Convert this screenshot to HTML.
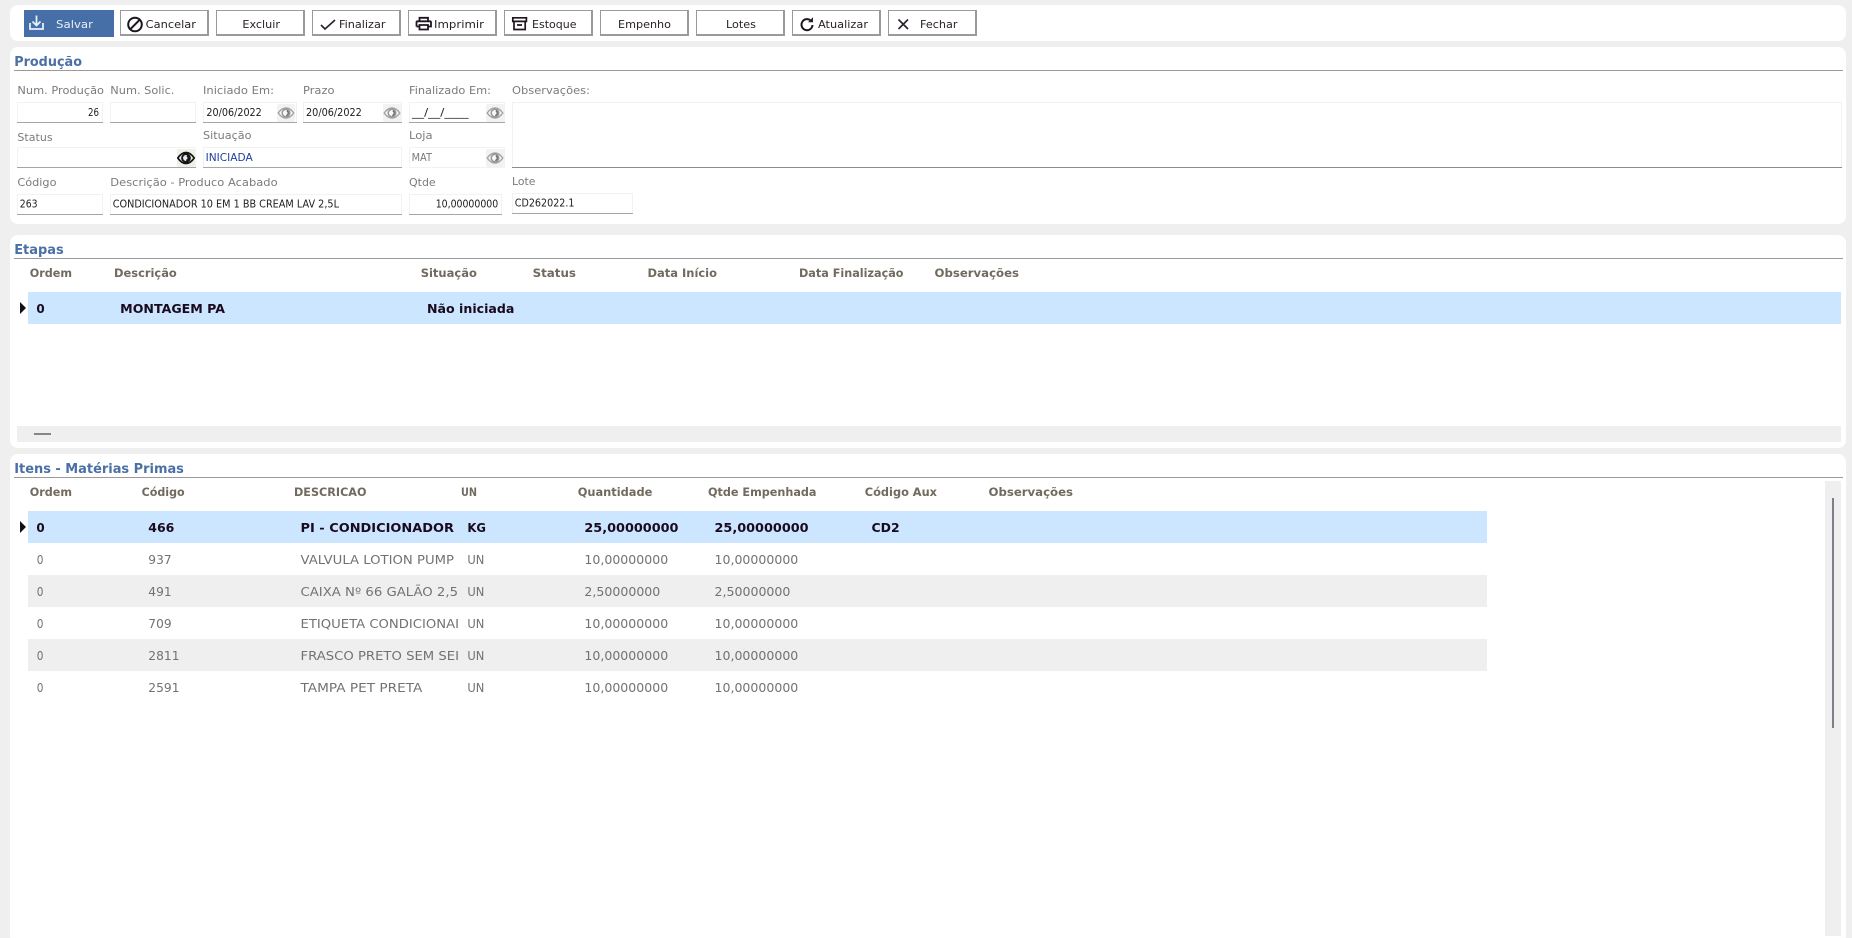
<!DOCTYPE html>
<html lang="pt-BR">
<head>
<meta charset="utf-8">
<title>Produção</title>
<style>
html,body{margin:0;padding:0;width:1852px;height:938px;overflow:hidden;background:#efefef}
svg{display:block}
text{font-family:"DejaVu Sans","Liberation Sans",sans-serif;font-size:11px;white-space:pre}
.t{font-size:13px;font-weight:700;fill:#4a70a6}
.b{fill:#2a2226;font-size:11px}
.l{fill:#7b7b7b}
.v{fill:#1c1c1c;font-size:11px}
.h{font-weight:700;fill:#72695f;font-size:11.5px}
.s{font-weight:700;fill:#1a0a1e;font-size:12px}
.r{fill:#727272;font-size:12px}
.i{fill:none;stroke:#2a1f2a;stroke-width:1.6}
.k{fill:none;stroke:#1e161e;stroke-width:2}
</style>
</head>
<body>
<svg width="1852" height="938" viewBox="0 0 1852 938" xmlns="http://www.w3.org/2000/svg">
<defs>
<symbol id="eye" viewBox="0 0 18 18">
<rect x="0" y="0" width="18" height="18" rx="2" fill="#f2f2f2"/>
<path d="M1.200 9C3.800 5.300 6.400 4 9 4s5.200 1.300 7.800 5C14.200 12.700 11.600 14 9 14S3.800 12.700 1.200 9z" fill="#f7f7f7" stroke="#a2a2a2" stroke-width="1.400"/>
<circle cx="9" cy="9" r="3.800" fill="none" stroke="#969696" stroke-width="1.500"/>
<path d="M9.800 6.800a2.400 2.400 0 0 1-.6 4.600" fill="none" stroke="#6f6f6f" stroke-width="1.400"/>
</symbol>
<symbol id="eyed" viewBox="0 0 18 18">
<rect x="0" y="0" width="18" height="18" rx="2" fill="#f2efe8"/>
<path d="M.8 9C3.600 4.900 6.300 3.500 9 3.500s5.400 1.400 8.200 5.500C14.400 13.100 11.700 14.500 9 14.500S3.600 13.100.8 9z" fill="#e9edf2" stroke="#141414" stroke-width="1.700"/>
<circle cx="9" cy="9" r="3.900" fill="none" stroke="#141414" stroke-width="1.900"/>
<path d="M9.800 6.800a2.400 2.400 0 0 1-.6 4.600" fill="none" stroke="#141414" stroke-width="1.600"/>
</symbol>
</defs>

<!-- panels -->
<rect x="10" y="5" width="1836" height="36" rx="8" fill="#fff"/>
<rect x="10" y="47" width="1836" height="177" rx="8" fill="#fff"/>
<rect x="10" y="235" width="1836" height="213" rx="8" fill="#fff"/>
<rect x="10" y="454" width="1836" height="490" rx="8" fill="#fff"/>

<!-- toolbar -->
<rect x="24" y="10" width="90" height="27" fill="#466fa8"/>
<g fill="#9a9a9a">
<rect x="120" y="10" width="89" height="26"/><rect x="216" y="10" width="89" height="26"/><rect x="312" y="10" width="89" height="26"/><rect x="408" y="10" width="89" height="26"/><rect x="504" y="10" width="89" height="26"/><rect x="600" y="10" width="89" height="26"/><rect x="696" y="10" width="89" height="26"/><rect x="792" y="10" width="89" height="26"/><rect x="888" y="10" width="89" height="26"/>
</g>
<g fill="#fff">
<rect x="121" y="11" width="86" height="23"/><rect x="217" y="11" width="86" height="23"/><rect x="313" y="11" width="86" height="23"/><rect x="409" y="11" width="86" height="23"/><rect x="505" y="11" width="86" height="23"/><rect x="601" y="11" width="86" height="23"/><rect x="697" y="11" width="86" height="23"/><rect x="793" y="11" width="86" height="23"/><rect x="889" y="11" width="86" height="23"/>
</g>
<path d="M36.500 15.500V25M32.500 21.500l4 4 4-4M30 23v6h13v-6" fill="none" stroke="#e8eef6" stroke-width="1.800"/>
<circle cx="135" cy="24.500" r="6.800" class="k"/><path d="M130.200 29.300L139.800 19.700" class="k"/>
<path d="M321 25l4 4 10-9" class="i"/>
<path d="M419.500 21.500V17.800h8.500v3.700M416.500 26.500v-4.200q0-1 1-1h12.500q1 0 1 1v4.200h-3M419.500 26.500h-3M419.500 25h8.500v4.500h-8.500z" class="k" stroke-width="1.800" style="stroke-width:1.800"/>
<path d="M512.800 17.800h13.600v3.600h-13.600zM514 21.400V29.500h11.200V21.400M517 25h5" class="k" style="stroke-width:1.700"/>
<path d="M811.500 21.500A5.500 5.500 0 1 0 812.500 25" class="k"/><path d="M808 22.200h5v-5z" fill="#2a1f2a"/>
<path d="M898.500 19.500l9.500 9.500M908 19.500L898.500 29" class="i"/>

<text x="56" y="28" fill="#e8eef6" textLength="37" lengthAdjust="spacingAndGlyphs">Salvar</text>
<text class="b" x="145.700" y="28" textLength="50.300" lengthAdjust="spacingAndGlyphs">Cancelar</text>
<text class="b" x="242.400" y="28" textLength="37.600" lengthAdjust="spacingAndGlyphs">Excluir</text>
<text class="b" x="339" y="28" textLength="46.500" lengthAdjust="spacingAndGlyphs">Finalizar</text>
<text class="b" x="434" y="28" textLength="50" lengthAdjust="spacingAndGlyphs">Imprimir</text>
<text class="b" x="532" y="28" textLength="44.500" lengthAdjust="spacingAndGlyphs">Estoque</text>
<text class="b" x="618" y="28" textLength="53" lengthAdjust="spacingAndGlyphs">Empenho</text>
<text class="b" x="726" y="28" textLength="30" lengthAdjust="spacingAndGlyphs">Lotes</text>
<text class="b" x="818" y="28" textLength="50" lengthAdjust="spacingAndGlyphs">Atualizar</text>
<text class="b" x="920" y="28" textLength="37.500" lengthAdjust="spacingAndGlyphs">Fechar</text>

<!-- Produção -->
<text class="t" x="14.200" y="66" textLength="67.800" lengthAdjust="spacingAndGlyphs">Produção</text>
<rect x="14" y="70" width="1829" height="1" fill="#9a9a9a"/>
<text class="l" x="17.400" y="94" textLength="86.600" lengthAdjust="spacingAndGlyphs">Num. Produção</text>
<text class="l" x="110.300" y="94" textLength="64.100" lengthAdjust="spacingAndGlyphs">Num. Solic.</text>
<text class="l" x="203" y="94" textLength="71" lengthAdjust="spacingAndGlyphs">Iniciado Em:</text>
<text class="l" x="303" y="94" textLength="31.500" lengthAdjust="spacingAndGlyphs">Prazo</text>
<text class="l" x="409" y="94" textLength="82" lengthAdjust="spacingAndGlyphs">Finalizado Em:</text>
<text class="l" x="512" y="94" textLength="78" lengthAdjust="spacingAndGlyphs">Observações:</text>
<text class="l" x="17.400" y="141" textLength="35.200" lengthAdjust="spacingAndGlyphs">Status</text>
<text class="l" x="203" y="139" textLength="48.500" lengthAdjust="spacingAndGlyphs">Situação</text>
<text class="l" x="409" y="139" textLength="23.600" lengthAdjust="spacingAndGlyphs">Loja</text>
<text class="l" x="17.400" y="186" textLength="39.100" lengthAdjust="spacingAndGlyphs">Código</text>
<text class="l" x="110.300" y="186" textLength="167.300" lengthAdjust="spacingAndGlyphs">Descrição - Produco Acabado</text>
<text class="l" x="409" y="186" textLength="26.700" lengthAdjust="spacingAndGlyphs">Qtde</text>
<text class="l" x="512" y="185" textLength="23.400" lengthAdjust="spacingAndGlyphs">Lote</text>

<!-- inputs -->
<g fill="#fff" stroke="#e6e6e6" stroke-dasharray="1 1">
<rect x="17.500" y="102.500" width="85" height="20"/>
<rect x="110.500" y="102.500" width="85" height="20"/>
<rect x="203.500" y="102.500" width="93" height="20"/>
<rect x="303.500" y="102.500" width="98" height="20"/>
<rect x="409.500" y="102.500" width="95" height="20"/>
<rect x="512.500" y="102.500" width="1329" height="65"/>
<rect x="17.500" y="147.500" width="178" height="20"/>
<rect x="203.500" y="147.500" width="198" height="20"/>
<rect x="409.500" y="147.500" width="95" height="20"/>
<rect x="17.500" y="194.500" width="85" height="20"/>
<rect x="110.500" y="194.500" width="291" height="20"/>
<rect x="409.500" y="194.500" width="92" height="20"/>
<rect x="512.500" y="193.500" width="120" height="20"/>
</g>
<g fill="#a6a6a6">
<rect x="17" y="122" width="86" height="1"/><rect x="110" y="122" width="86" height="1"/><rect x="203" y="122" width="94" height="1"/><rect x="303" y="122" width="99" height="1"/><rect x="409" y="122" width="96" height="1"/>
<rect x="512" y="167" width="1330" height="1" fill="#8c8c8c"/>
<rect x="17" y="167" width="179" height="1"/><rect x="203" y="167" width="199" height="1"/>
<rect x="17" y="214" width="86" height="1"/><rect x="110" y="214" width="292" height="1"/><rect x="409" y="214" width="93" height="1"/><rect x="512" y="213" width="121" height="1"/>
</g>
<use href="#eye" x="277" y="104" width="18" height="18"/>
<use href="#eye" x="383" y="104" width="18" height="18"/>
<use href="#eye" x="486" y="104" width="18" height="18"/>
<use href="#eyed" x="177" y="149" width="18" height="18"/>
<use href="#eye" x="486" y="149" width="18" height="18"/>

<text class="v" x="88" y="116" textLength="11" lengthAdjust="spacingAndGlyphs">26</text>
<text class="v" x="206.400" y="116" textLength="55.400" lengthAdjust="spacingAndGlyphs">20/06/2022</text>
<text class="v" x="306" y="116" textLength="55.800" lengthAdjust="spacingAndGlyphs">20/06/2022</text>
<text class="v" x="412" y="116" textLength="56.600" lengthAdjust="spacingAndGlyphs">__/__/____</text>
<text x="205.600" y="161" fill="#1f3fa0" textLength="47.100" lengthAdjust="spacingAndGlyphs">INICIADA</text>
<text x="411.600" y="161" fill="#7b7b7b" textLength="20.400" lengthAdjust="spacingAndGlyphs">MAT</text>
<text class="v" x="19.800" y="207.500" textLength="17.800" lengthAdjust="spacingAndGlyphs">263</text>
<text class="v" x="112.700" y="207.500" textLength="226.300" lengthAdjust="spacingAndGlyphs">CONDICIONADOR 10 EM 1 BB CREAM LAV 2,5L</text>
<text class="v" x="435.700" y="207.500" textLength="62.500" lengthAdjust="spacingAndGlyphs">10,00000000</text>
<text class="v" x="514.800" y="206.500" textLength="59.700" lengthAdjust="spacingAndGlyphs">CD262022.1</text>

<!-- Etapas -->
<text class="t" x="14.200" y="254" textLength="49.500" lengthAdjust="spacingAndGlyphs">Etapas</text>
<rect x="14" y="258" width="1829" height="1" fill="#9a9a9a"/>
<text class="h" x="29.700" y="277" textLength="42.300" lengthAdjust="spacingAndGlyphs">Ordem</text>
<text class="h" x="114" y="277" textLength="62.800" lengthAdjust="spacingAndGlyphs">Descrição</text>
<text class="h" x="420.700" y="277" textLength="56.200" lengthAdjust="spacingAndGlyphs">Situação</text>
<text class="h" x="532.600" y="277" textLength="43.400" lengthAdjust="spacingAndGlyphs">Status</text>
<text class="h" x="647.500" y="277" textLength="69.500" lengthAdjust="spacingAndGlyphs">Data Início</text>
<text class="h" x="799" y="277" textLength="104.500" lengthAdjust="spacingAndGlyphs">Data Finalização</text>
<text class="h" x="934.500" y="277" textLength="84.500" lengthAdjust="spacingAndGlyphs">Observações</text>
<rect x="28" y="292" width="1813" height="32" fill="#cbe6fe"/>
<path d="M20 302l6 6-6 6z" fill="#111"/>
<text class="s" x="36.400" y="313" textLength="8.300" lengthAdjust="spacingAndGlyphs">0</text>
<text class="s" x="120.200" y="313" textLength="104.800" lengthAdjust="spacingAndGlyphs">MONTAGEM PA</text>
<text class="s" x="427" y="313" textLength="87.400" lengthAdjust="spacingAndGlyphs">Não iniciada</text>
<rect x="17" y="426" width="1824" height="16" fill="#efefef"/>
<rect x="34" y="433" width="17" height="2" fill="#85858c"/>

<!-- Itens -->
<text class="t" x="14.200" y="473" textLength="169.700" lengthAdjust="spacingAndGlyphs">Itens - Matérias Primas</text>
<rect x="14" y="477" width="1829" height="1" fill="#9a9a9a"/>
<text class="h" x="29.700" y="496" textLength="42.300" lengthAdjust="spacingAndGlyphs">Ordem</text>
<text class="h" x="141.600" y="496" textLength="43.100" lengthAdjust="spacingAndGlyphs">Código</text>
<text class="h" x="294" y="496" textLength="72.500" lengthAdjust="spacingAndGlyphs">DESCRICAO</text>
<text class="h" x="461" y="496" textLength="16" lengthAdjust="spacingAndGlyphs">UN</text>
<text class="h" x="577.700" y="496" textLength="74.700" lengthAdjust="spacingAndGlyphs">Quantidade</text>
<text class="h" x="708" y="496" textLength="108.500" lengthAdjust="spacingAndGlyphs">Qtde Empenhada</text>
<text class="h" x="864.800" y="496" textLength="72.200" lengthAdjust="spacingAndGlyphs">Código Aux</text>
<text class="h" x="988.500" y="496" textLength="84.500" lengthAdjust="spacingAndGlyphs">Observações</text>

<rect x="28" y="511" width="1459" height="32" fill="#cbe6fe"/>
<rect x="28" y="575" width="1459" height="32" fill="#efefef"/>
<rect x="28" y="639" width="1459" height="32" fill="#efefef"/>
<path d="M20 521l6 6-6 6z" fill="#111"/>

<text class="s" x="36.400" y="532" textLength="8.300" lengthAdjust="spacingAndGlyphs">0</text>
<text class="s" x="148.300" y="532" textLength="26.100" lengthAdjust="spacingAndGlyphs">466</text>
<text class="s" x="300.500" y="532" textLength="153.500" lengthAdjust="spacingAndGlyphs">PI - CONDICIONADOR</text>
<text class="s" x="467.400" y="532" textLength="18.600" lengthAdjust="spacingAndGlyphs">KG</text>
<text class="s" x="584.400" y="532" textLength="94.100" lengthAdjust="spacingAndGlyphs">25,00000000</text>
<text class="s" x="714.500" y="532" textLength="94.100" lengthAdjust="spacingAndGlyphs">25,00000000</text>
<text class="s" x="871.500" y="532" textLength="28.100" lengthAdjust="spacingAndGlyphs">CD2</text>

<text class="r" x="36.800" y="564" textLength="6.700" lengthAdjust="spacingAndGlyphs">0</text>
<text class="r" x="148.300" y="564" textLength="23.300" lengthAdjust="spacingAndGlyphs">937</text>
<text class="r" x="300.500" y="564" textLength="153.500" lengthAdjust="spacingAndGlyphs">VALVULA LOTION PUMP</text>
<text class="r" x="467.400" y="564" textLength="17" lengthAdjust="spacingAndGlyphs">UN</text>
<text class="r" x="584.400" y="564" textLength="83.800" lengthAdjust="spacingAndGlyphs">10,00000000</text>
<text class="r" x="714.500" y="564" textLength="83.800" lengthAdjust="spacingAndGlyphs">10,00000000</text>

<text class="r" x="36.800" y="596" textLength="6.700" lengthAdjust="spacingAndGlyphs">0</text>
<text class="r" x="148.300" y="596" textLength="23.300" lengthAdjust="spacingAndGlyphs">491</text>
<text class="r" x="300.500" y="596" textLength="157.500" lengthAdjust="spacingAndGlyphs">CAIXA Nº 66 GALÃO 2,5</text>
<text class="r" x="467.400" y="596" textLength="17" lengthAdjust="spacingAndGlyphs">UN</text>
<text class="r" x="584.400" y="596" textLength="75.900" lengthAdjust="spacingAndGlyphs">2,50000000</text>
<text class="r" x="714.500" y="596" textLength="75.900" lengthAdjust="spacingAndGlyphs">2,50000000</text>

<text class="r" x="36.800" y="628" textLength="6.700" lengthAdjust="spacingAndGlyphs">0</text>
<text class="r" x="148.300" y="628" textLength="23.300" lengthAdjust="spacingAndGlyphs">709</text>
<text class="r" x="300.500" y="628" textLength="158.500" lengthAdjust="spacingAndGlyphs">ETIQUETA CONDICIONAI</text>
<text class="r" x="467.400" y="628" textLength="17" lengthAdjust="spacingAndGlyphs">UN</text>
<text class="r" x="584.400" y="628" textLength="83.800" lengthAdjust="spacingAndGlyphs">10,00000000</text>
<text class="r" x="714.500" y="628" textLength="83.800" lengthAdjust="spacingAndGlyphs">10,00000000</text>

<text class="r" x="36.800" y="660" textLength="6.700" lengthAdjust="spacingAndGlyphs">0</text>
<text class="r" x="148.300" y="660" textLength="31.200" lengthAdjust="spacingAndGlyphs">2811</text>
<text class="r" x="300.500" y="660" textLength="158.500" lengthAdjust="spacingAndGlyphs">FRASCO PRETO SEM SEI</text>
<text class="r" x="467.400" y="660" textLength="17" lengthAdjust="spacingAndGlyphs">UN</text>
<text class="r" x="584.400" y="660" textLength="83.800" lengthAdjust="spacingAndGlyphs">10,00000000</text>
<text class="r" x="714.500" y="660" textLength="83.800" lengthAdjust="spacingAndGlyphs">10,00000000</text>

<text class="r" x="36.800" y="692" textLength="6.700" lengthAdjust="spacingAndGlyphs">0</text>
<text class="r" x="148.300" y="692" textLength="31.200" lengthAdjust="spacingAndGlyphs">2591</text>
<text class="r" x="300.500" y="692" textLength="121.800" lengthAdjust="spacingAndGlyphs">TAMPA PET PRETA</text>
<text class="r" x="467.400" y="692" textLength="17" lengthAdjust="spacingAndGlyphs">UN</text>
<text class="r" x="584.400" y="692" textLength="83.800" lengthAdjust="spacingAndGlyphs">10,00000000</text>
<text class="r" x="714.500" y="692" textLength="83.800" lengthAdjust="spacingAndGlyphs">10,00000000</text>

<!-- vertical scrollbar -->
<rect x="1825" y="481" width="16" height="455" fill="#efefef"/>
<rect x="1832" y="498" width="2" height="230" fill="#7f7f88"/>
</svg>
</body>
</html>
